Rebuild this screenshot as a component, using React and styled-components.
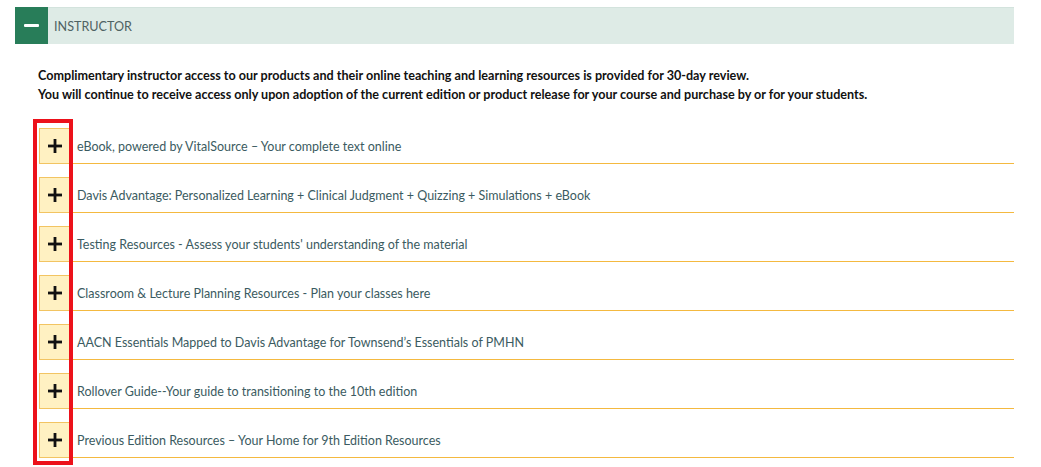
import React from "react";
import styled, { createGlobalStyle } from "styled-components";

const GlobalStyle = createGlobalStyle`
  html, body {
    margin: 0;
    background: #ffffff;
    font-family: Lato, "Open Sans", sans-serif;
  }
`;

const Page = styled.div`
  position: relative;
  box-sizing: border-box;
  min-height: 467px;
  padding: 7px 27px 9px 15px;
  width: 1041px;
`;

const HeaderBar = styled.div`
  display: flex;
  align-items: center;
  height: 37px;
  background: #deebe6;
  border-top: 1px solid #d3e3dd;
  box-sizing: border-box;
`;

const ToggleSquare = styled.div`
  width: 33px;
  height: 37px;
  margin-top: -1px;
  background: #287d59;
  display: flex;
  align-items: center;
  justify-content: center;
`;

const MinusBar = styled.span`
  display: block;
  width: 15px;
  height: 3px;
  border-radius: 1px;
  background: #ffffff;
`;

const HeaderTitle = styled.div`
  margin-left: 6px;
  font-size: 12.6px;
  color: #4f6263;
  text-transform: uppercase;
`;

const Body = styled.div`
  padding: 22px 0 0 23px;
`;

const Intro = styled.p`
  margin: 0 0 24px 0;
  font-size: 12.6px;
  font-weight: 700;
  line-height: 19px;
  color: #111111;
`;

const List = styled.div`
  display: flex;
  flex-direction: column;
  gap: 13px;
  padding-left: 1px;
`;

const Row = styled.div`
  display: flex;
  align-items: stretch;
  height: 36px;
  border-bottom: 1px solid #f4b940;
  box-sizing: border-box;
`;

const PlusBox = styled.div`
  width: 31px;
  margin-bottom: -1px;
  box-sizing: border-box;
  background: #fff1c2;
  border: 1px solid #f2c462;
  display: flex;
  align-items: center;
  justify-content: center;
`;

const RowLabel = styled.div`
  display: flex;
  align-items: center;
  padding-left: 7px;
  padding-top: 2px;
  font-size: 12.5px;
  color: #3b5b61;
`;

const Highlight = styled.div`
  position: absolute;
  left: 33px;
  top: 119px;
  width: 40px;
  height: 346px;
  border: 4px solid #ec111a;
  box-sizing: border-box;
  pointer-events: none;
`;

const items = [
  "eBook, powered by VitalSource \u2013 Your complete text online",
  "Davis Advantage: Personalized Learning + Clinical Judgment + Quizzing + Simulations + eBook",
  "Testing Resources - Assess your students' understanding of the material",
  "Classroom & Lecture Planning Resources - Plan your classes here",
  "AACN Essentials Mapped to Davis Advantage for Townsend\u2019s Essentials of PMHN",
  "Rollover Guide--Your guide to transitioning to the 10th edition",
  "Previous Edition Resources \u2013 Your Home for 9th Edition Resources",
];

const PlusIcon = () => (
  <svg width="14" height="14" viewBox="0 0 14 14">
    <rect x="5.6" y="0" width="2.8" height="14" fill="#111" />
    <rect x="0" y="5.6" width="14" height="2.8" fill="#111" />
  </svg>
);

const App = () => {
  return (
    <>
      <GlobalStyle />
      <Page>
        <HeaderBar>
          <ToggleSquare>
            <MinusBar />
          </ToggleSquare>
          <HeaderTitle>Instructor</HeaderTitle>
        </HeaderBar>
        <Body>
          <Intro>
            Complimentary instructor access to our products and their online teaching and learning resources is provided for 30-day review.
            <br />
            You will continue to receive access only upon adoption of the current edition or product release for your course and purchase by or for your students.
          </Intro>
          <List>
            {items.map((text) => (
              <Row key={text}>
                <PlusBox>
                  <PlusIcon />
                </PlusBox>
                <RowLabel>{text}</RowLabel>
              </Row>
            ))}
          </List>
        </Body>
        <Highlight />
      </Page>
    </>
  );
};

export default App;
